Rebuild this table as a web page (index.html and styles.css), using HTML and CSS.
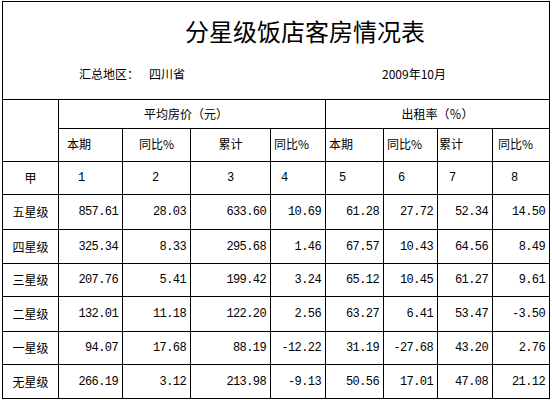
FILE: index.html
```html
<!DOCTYPE html>
<html lang="zh-CN">
<head>
    <meta charset="UTF-8">
    <title>分星级饭店客房情况表</title>
    <link rel="stylesheet" href="styles.css">
</head>
<body>
    <div class="sheet">
        <!-- Title block -->
        <div class="head">
            <div class="title">分星级饭店客房情况表</div>
            <div class="meta">
                <span class="area">汇总地区：</span>
                <span class="prov">四川省</span>
                <span class="date">2009年10月</span>
            </div>
        </div>

        <table class="grid">
            <colgroup>
                <col class="w0"><col class="w1"><col class="w2"><col class="w3"><col class="w4">
                <col class="w5"><col class="w6"><col class="w7"><col class="w8">
            </colgroup>
            <tr class="h1">
                <td rowspan="2"></td>
                <td colspan="4" class="grp1">平均房价（元）</td>
                <td colspan="4" class="grp2">出租率（％）</td>
            </tr>
            <tr class="h2">
                <td>本期</td><td>同比%</td><td>累计</td><td>同比%</td>
                <td>本期</td><td>同比%</td><td>累计</td><td>同比%</td>
            </tr>
            <tr class="idx">
                <td class="lbl">甲</td>
                <td>1</td><td>2</td><td>3</td><td>4</td><td>5</td><td>6</td><td>7</td><td>8</td>
            </tr>
            <tbody id="rows"></tbody>
        </table>
    </div>

    <script>
        // Table data
        const rowsData = [
            { name: "五星级", vals: ["857.61", "28.03", "633.60", "10.69", "61.28", "27.72", "52.34", "14.50"], h: 35 },
            { name: "四星级", vals: ["325.34", "8.33", "295.68", "1.46", "67.57", "10.43", "64.56", "8.49"], h: 34 },
            { name: "三星级", vals: ["207.76", "5.41", "199.42", "3.24", "65.12", "10.45", "61.27", "9.61"], h: 33 },
            { name: "二星级", vals: ["132.01", "11.18", "122.20", "2.56", "63.27", "6.41", "53.47", "-3.50"], h: 35 },
            { name: "一星级", vals: ["94.07", "17.68", "88.19", "-12.22", "31.19", "-27.68", "43.20", "2.76"], h: 33 },
            { name: "无星级", vals: ["266.19", "3.12", "213.98", "-9.13", "50.56", "17.01", "47.08", "21.12"], h: 34 }
        ];

        const tbody = document.getElementById("rows");
        rowsData.forEach(r => {
            const tr = document.createElement("tr");
            tr.className = "data";
            tr.style.height = r.h + "px";
            let html = `<td class="lbl">${r.name}</td>`;
            r.vals.forEach(v => { html += `<td class="num">${v}</td>`; });
            tr.innerHTML = html;
            tbody.appendChild(tr);
        });
    </script>
</body>
</html>
```

FILE: styles.css
```css
body {
    margin: 0;
    background: #fff;
    color: #000;
    font-family: "Noto Sans CJK SC", sans-serif;
    font-size: 12px;
}
.sheet {
    margin: 1px 0 0 2px;
    width: 548px;
}
.head {
    border: 1px solid #000;
    border-bottom: none;
    height: 97px;
}
.title {
    font-size: 24px;
    line-height: 30px;
    padding: 14px 0 0 58px;
    text-align: center;
}
.meta {
    display: flex;
    padding: 20px 0 0 76px;
    line-height: 16px;
}
.prov {
    margin-left: 10px;
}
.date {
    margin-left: 197px;
}
.grid {
    border-collapse: collapse;
    table-layout: fixed;
    width: 548px;
}
.grid td {
    border: 1px solid #000;
    padding: 0;
    white-space: nowrap;
    line-height: 14px;
}
.w0 { width: 56px; }
.w1 { width: 64px; }
.w2 { width: 68px; }
.w3 { width: 80px; }
.w4 { width: 55px; }
.w5 { width: 58px; }
.w6 { width: 54px; }
.w7 { width: 55px; }
.w8 { width: 57px; }

.h1 { height: 29px; }
.h2 { height: 33px; }
.h2 td { padding-bottom: 2px; }
.idx { height: 33px; }

.grp1 { padding-left: 85px !important; }
.grp2 { text-align: center; padding-left: 0; }

.h2 td { padding-left: 3px; }
.h2 td:nth-child(1) { padding-left: 8px; }
.h2 td:nth-child(2),
.h2 td:nth-child(3) { text-align: center; padding-left: 0; }
.h2 td:nth-child(6) { padding-left: 3px; }
.h2 td:nth-child(7) { padding-left: 1px; }
.h2 td:nth-child(8) { padding-left: 5px; }

.lbl { text-align: center; }

.idx td:not(.lbl) {
    font-family: "Liberation Mono", monospace;
    font-size: 12px;
}
.idx td:nth-child(2) { padding-left: 19px; }
.idx td:nth-child(3) { padding-left: 29px; }
.idx td:nth-child(4) { padding-left: 36px; }
.idx td:nth-child(5) { padding-left: 10px; }
.idx td:nth-child(6) { padding-left: 13px; }
.idx td:nth-child(7) { padding-left: 14px; }
.idx td:nth-child(8) { padding-left: 11px; }
.idx td:nth-child(9) { padding-left: 18px; }

.num {
    font-family: "Liberation Mono", monospace;
    font-size: 12px;
    letter-spacing: -0.6px;
    text-align: right;
    padding-right: 4px !important;
}
```
